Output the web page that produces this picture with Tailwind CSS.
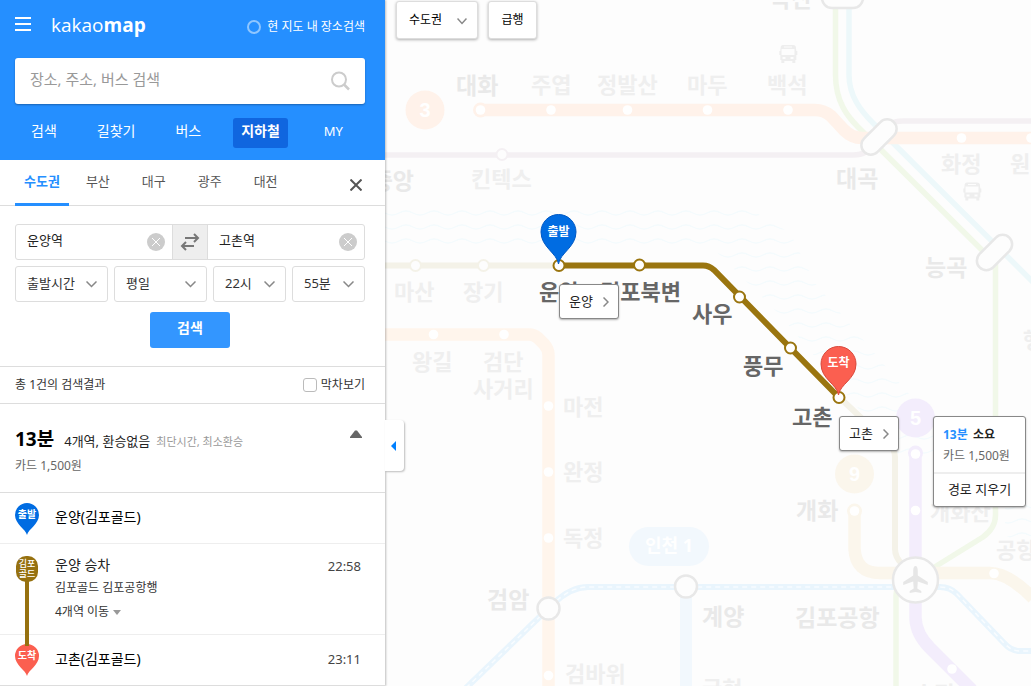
<!DOCTYPE html>
<html lang="ko">
<head>
  <meta charset="UTF-8" />
  <meta name="viewport" content="width=device-width, initial-scale=1.0"/>
  <title>카카오맵 지하철</title>
  <script src="https://cdn.jsdelivr.net/npm/@tailwindcss/browser@4"></script>
</head>
<body class="flex h-screen overflow-hidden bg-[#fdfdfd] font-['Noto_Sans','Noto_Sans_CJK_KR',sans-serif] text-xs text-[#333]">

  <!-- Side panel -->
  <aside class="relative z-10 flex h-full w-[385px] shrink-0 flex-col bg-white shadow-[1px_0_2px_rgba(0,0,0,0.25)]">

    <header class="h-40 shrink-0 bg-[#258fff] pr-5 pl-[15px] text-white">
      <div class="flex h-[58px] items-start pt-3">
        <button type="button" aria-label="메뉴" class="mt-1 mr-5">
          <svg class="block h-4 w-4" viewBox="0 0 16 16" fill="#fff"><path d="M0 1h16v2H0zM0 7h16v2H0zM0 13h16v2H0z"/></svg>
        </button>
        <a href="#" class="font-['Open_Sans',sans-serif] text-[19px] leading-[26px] font-normal">kakao<b class="font-bold">map</b></a>
        <label class="mt-1 ml-auto flex items-center gap-[6px] leading-[22px]">
          <input type="checkbox" class="h-[14px] w-[14px] appearance-none rounded-full border-2 border-[#8fc6ff]"/>
          현 지도 내 장소검색
        </label>
      </div>

      <form class="flex h-[46px] items-center rounded-[3px] bg-white px-[15px] shadow-[0_1px_2px_rgba(0,0,0,0.3)]">
        <input type="text" aria-label="장소 검색" placeholder="장소, 주소, 버스 검색" class="min-w-0 flex-1 pb-1 text-[15px] outline-none placeholder:text-[#999]"/>
        <button type="button" aria-label="검색">
          <svg class="block h-5 w-5" viewBox="0 0 20 20" fill="none" stroke="#ccc" stroke-width="2"><circle cx="9" cy="8.500" r="7"/><path d="M14 13.500l5 5" stroke-width="2.500"/></svg>
        </button>
      </form>

      <nav class="mt-[14px] flex gap-6 pl-2 text-sm leading-[26px]">
        <a href="#" class="h-[30px] px-2">검색</a>
        <a href="#" class="h-[30px] px-2">길찾기</a>
        <a href="#" class="h-[30px] px-2">버스</a>
        <a href="#" class="h-[30px] rounded-[3px] bg-[#1066df] px-2 font-bold">지하철</a>
        <a href="#" class="ml-1 h-[30px] px-2 text-[13px]">MY</a>
      </nav>
    </header>

    <!-- Region tabs -->
    <div class="flex h-[46px] shrink-0 items-stretch border-b border-[#ddd] pr-5 pl-[15px] text-[13px] leading-[42px] text-[#555]">
      <a href="#" class="-mb-px border-b-3 border-[#258fff] px-[9px] font-bold text-[#258fff]">수도권</a>
      <a href="#" class="ml-2 px-[9px]">부산</a>
      <a href="#" class="ml-[14px] px-[9px]">대구</a>
      <a href="#" class="ml-[14px] px-[9px]">광주</a>
      <a href="#" class="ml-[14px] px-[9px]">대전</a>
      <button type="button" aria-label="닫기" class="mt-1 mr-[3px] ml-auto">
        <svg class="block h-3 w-3" viewBox="0 0 12 12" stroke="#555" stroke-width="2"><path d="M.5.500l11 11M11.500.500l-11 11"/></svg>
      </button>
    </div>

    <!-- Route form -->
    <form class="h-[161px] shrink-0 border-b border-[#ddd] pt-[18px] pr-5 pl-[15px]">
      <div class="flex h-9 rounded-[3px] border border-[#ddd]">
        <div class="flex flex-1 items-center pr-[7px] pl-[11px]">
          <input type="text" aria-label="출발역" value="운양역" class="w-0 min-w-0 flex-1 pb-[2px] text-[13px] text-[#222] outline-none"/>
          <button type="button" aria-label="출발역 지우기">
            <svg class="block h-[18px] w-[18px]" viewBox="0 0 18 18"><circle cx="9" cy="9" r="9" fill="#ccc"/><path d="M5 5l8 8M13 5l-8 8" stroke="#fff"/></svg>
          </button>
        </div>
        <button type="button" aria-label="출발 도착 바꾸기" class="flex w-9 items-center justify-center border-x border-[#ddd] bg-[#eee]">
          <svg class="block h-[18px] w-5" viewBox="0 0 20 18" fill="none" stroke="#777" stroke-width="2"><path d="M5 5h13M14 1l4 4-4 4M14 13H2M6 9l-4 4 4 4"/></svg>
        </button>
        <div class="flex flex-1 items-center pr-[7px] pl-[11px]">
          <input type="text" aria-label="도착역" value="고촌역" class="w-0 min-w-0 flex-1 pb-[2px] text-[13px] text-[#222] outline-none"/>
          <button type="button" aria-label="도착역 지우기">
            <svg class="block h-[18px] w-[18px]" viewBox="0 0 18 18"><circle cx="9" cy="9" r="9" fill="#ccc"/><path d="M5 5l8 8M13 5l-8 8" stroke="#fff"/></svg>
          </button>
        </div>
      </div>

      <div class="mt-[6px] grid grid-cols-[93fr_93fr_73fr_73fr] gap-[6px] text-[13px] text-[#333]">
        <div class="relative">
          <select aria-label="시간 기준" class="h-9 w-full appearance-none rounded-[3px] border border-[#ddd] pl-[11px]"><option>출발시간</option></select>
          <svg class="pointer-events-none absolute top-[15px] right-[11px] h-[7px] w-[11px]" viewBox="0 0 11 7" fill="none" stroke="#888" stroke-width="1.500"><path d="M.5.500l5 5 5-5"/></svg>
        </div>
        <div class="relative">
          <select aria-label="요일" class="h-9 w-full appearance-none rounded-[3px] border border-[#ddd] pl-[11px]"><option>평일</option></select>
          <svg class="pointer-events-none absolute top-[15px] right-[11px] h-[7px] w-[11px]" viewBox="0 0 11 7" fill="none" stroke="#888" stroke-width="1.500"><path d="M.5.500l5 5 5-5"/></svg>
        </div>
        <div class="relative">
          <select aria-label="시" class="h-9 w-full appearance-none rounded-[3px] border border-[#ddd] pl-[11px]"><option>22시</option></select>
          <svg class="pointer-events-none absolute top-[15px] right-[11px] h-[7px] w-[11px]" viewBox="0 0 11 7" fill="none" stroke="#888" stroke-width="1.500"><path d="M.5.500l5 5 5-5"/></svg>
        </div>
        <div class="relative">
          <select aria-label="분" class="h-9 w-full appearance-none rounded-[3px] border border-[#ddd] pl-[11px]"><option>55분</option></select>
          <svg class="pointer-events-none absolute top-[15px] right-[11px] h-[7px] w-[11px]" viewBox="0 0 11 7" fill="none" stroke="#888" stroke-width="1.500"><path d="M.5.500l5 5 5-5"/></svg>
        </div>
      </div>

      <button type="button" class="mx-auto mt-[10px] block h-9 w-20 rounded-[3px] bg-[#3396ff] pb-1 text-sm font-bold text-white">검색</button>
    </form>

    <div class="flex h-[37px] shrink-0 items-center justify-between border-b border-[#ddd] pr-5 pl-[15px] text-xs">
      <p>총 1건의 검색결과</p>
      <label class="flex items-center gap-1">
        <input type="checkbox" class="h-[14px] w-[14px] appearance-none rounded-[3px] border border-[#bbb]"/>
        막차보기
      </label>
    </div>

    <!-- Route summary -->
    <section class="flex h-[89px] shrink-0 justify-between border-b border-[#ddd] px-[15px] pt-[22px]">
      <div>
        <div class="flex h-[26px] items-baseline leading-[26px]">
          <strong class="text-[19px] text-black">13분</strong>
          <span class="ml-[10px] text-[13px] text-[#222]">4개역, 환승없음</span>
          <span class="ml-[6px] text-[11px] text-[#999]">최단시간, 최소환승</span>
        </div>
        <p class="text-xs leading-7 text-[#666]">카드 1,500원</p>
      </div>
      <button type="button" aria-label="접기" class="mt-1 mr-2 self-start">
        <svg class="block h-2 w-3" viewBox="0 0 12 8" fill="#666"><path d="M0 8V7l5-6.500h2L12 7v1z"/></svg>
      </button>
    </section>

    <!-- Route steps -->
    <ol class="relative text-black">
      <li class="flex h-[51px] items-center border-b border-[#eee] px-[15px]">
        <svg class="mt-[2px] mr-4 h-8 w-6" viewBox="0 0 24 32">
          <path d="M12 32C10.500 26 0 21 0 12a12 12 0 0 1 24 0c0 9-10.500 14-12 20z" fill="#006ce2"/>
          <text x="12" y="15" font-size="10" font-weight="700" fill="#fff" text-anchor="middle">출발</text>
        </svg>
        <span class="pb-[2px] text-sm">운양(김포골드)</span>
      </li>
      <li class="flex h-[91px] border-b border-[#eee] px-[15px] pt-[10px]">
        <span class="mt-[2px] mr-[17px] ml-px flex h-[26px] w-[22px] shrink-0 flex-col items-center justify-center rounded-[10px] bg-[#967110] text-[9px] leading-[10px] font-medium text-white">
          <span>김포</span><span>골드</span>
        </span>
        <div class="flex-1">
          <p class="text-sm leading-[22px] text-[#222]">운양 승차</p>
          <p class="leading-6 text-[#333]">김포골드 김포공항행</p>
          <button type="button" class="flex items-center gap-1 leading-6 text-[#333]">4개역 이동
            <svg class="block h-[5px] w-2" viewBox="0 0 8 5" fill="#999"><path d="M0 0h8L4 5z"/></svg>
          </button>
        </div>
        <time class="mr-[9px] text-[13px] leading-6 text-[#444]">22:58</time>
      </li>
      <li class="flex h-[51px] items-center border-b border-[#ddd] px-[15px]">
        <svg class="mr-4 h-8 w-6" viewBox="0 0 24 32">
          <path d="M12 32C10.500 26 0 21 0 12a12 12 0 0 1 24 0c0 9-10.500 14-12 20z" fill="#fb5f50"/>
          <text x="12" y="15" font-size="10" font-weight="700" fill="#fff" text-anchor="middle">도착</text>
        </svg>
        <span class="flex-1 pb-[2px] text-sm">고촌(김포골드)</span>
        <time class="mr-[9px] text-[13px] text-[#444]">23:11</time>
      </li>
      <li aria-hidden="true" class="absolute top-[88px] left-[25px] h-[65px] w-1 bg-[#967110]"></li>
    </ol>

    <button type="button" aria-label="패널 접기" class="absolute top-[420px] left-full flex h-[51px] w-[19px] items-center rounded-r bg-white pl-[6px] shadow-[1px_1px_2px_rgba(0,0,0,0.25)]">
      <svg class="block h-[10px] w-[5px]" viewBox="0 0 5 10" fill="#0080ff"><path d="M5 0v10L0 5z"/></svg>
    </button>
  </aside>

  <!-- Subway map -->
  <main class="relative min-w-0 flex-1 overflow-hidden">
    <svg class="absolute inset-0 h-full w-full font-bold" viewBox="385 0 646 686" preserveAspectRatio="xMinYMin slice" fill="none">
      <defs>
        <pattern id="waves" width="28" height="14" patternUnits="userSpaceOnUse">
          <path d="M0 5q3.500 0 7-2t7-2 7 2 7 2" stroke="#f4fbfd" stroke-width="1.300"/>
        </pattern>
      </defs>
      <path d="M385 203h355l50 30 25 50 110 130 20 45h-45L780 315l-40-40-30-30H385zM1005 505h26v45l-26-15z" fill="url(#waves)"/>

      <!-- Gyeongui line and Seohae line -->
      <g stroke="#f1f8e9" stroke-width="5.500">
        <path d="M835.500 5V75C835.500 102 848 117 858 127L994 262"/>
        <path d="M995.500 262V515Q995.500 528 983 537L925 573M896 686V595Q896 585 905 580"/>
      </g>
      <path d="M849 5V75C849 96 861 111 873 123L1035 284" stroke="#edf8fa" stroke-width="5.500"/>

      <!-- GTX-A -->
      <path d="M385 155H853C867 155 869 149 877 140S886 121 903 121H1031" stroke="#f4f0f3" stroke-width="5.500"/>

      <!-- Line 3 -->
      <path d="M481 110H815Q824 110 831 116L844 130Q852 138 862 138H1031" stroke="#fff2ea" stroke-width="12.500"/>
      <circle cx="480.500" cy="110" r="7.500" fill="#fff2ea"/>
      <circle cx="425" cy="110" r="19.500" fill="#fff2ea"/>

      <!-- Incheon 2 -->
      <path d="M385 334.500H529Q534 334.500 538 338L544 344Q548.500 349 548.500 355V686" stroke="#fff5ec" stroke-width="12.500"/>

      <!-- Line 9 -->
      <path d="M854.500 511V549Q856 573 880 573H990Q1008 573 1033 598" stroke="#fbf6ec" stroke-width="12.500"/>
      <circle cx="854.500" cy="511" r="7.500" fill="#fbf6ec"/>
      <circle cx="854.500" cy="474" r="19.500" fill="#fbf6ec"/>

      <!-- Line 5 -->
      <path d="M915.500 453V618Q916 634 930 648L972 690" stroke="#f3edfc" stroke-width="12.500"/>
      <circle cx="915.500" cy="453" r="7.500" fill="#f3edfc"/>
      <circle cx="915.500" cy="418" r="19.500" fill="#f3edfc"/>

      <!-- Incheon 1 -->
      <path d="M686 587V686" stroke="#f2f8fd" stroke-width="12"/>
      <rect x="629" y="527" width="80" height="39" rx="19.500" fill="#f2f8fd"/>

      <!-- Airport railroad -->
      <g>
        <path d="M466 688L554 603Q571 587 588 587H940Q950 587 957 594L1004 643Q1011 651 1020 651H1031" stroke="#e9f5fd" stroke-width="6"/>
        <path d="M466 688L554 603Q571 587 588 587H940Q950 587 957 594L1004 643Q1011 651 1020 651H1031" stroke="#f8fcff" stroke-width="1.500" stroke-dasharray="5 4"/>
      </g>

      <!-- Gimpo Gold line -->
      <path d="M385 265.500H559M839 397L888 443Q895 449 895 457V549Q895 557 902 564" stroke="#f4f2e8" stroke-width="6"/>
      <g fill="#fdfdfd" stroke="#f4f2e8" stroke-width="2"><circle cx="415.500" cy="265.500" r="5.500"/><circle cx="483.500" cy="265.500" r="5.500"/></g>
      <circle cx="502" cy="154.500" r="5.500" fill="#fdfdfd" stroke="#f4f0f3" stroke-width="2"/>
      <path d="M559 265.500H703Q709 265.500 714 270L839 397.500" stroke="#9a750f" stroke-width="6"/>
      <g fill="#fff" stroke="#9a750f" stroke-width="2">
        <circle cx="559" cy="265.500" r="5.500"/><circle cx="639.500" cy="265" r="5.500"/><circle cx="739.500" cy="297" r="5.500"/><circle cx="790.500" cy="348" r="5.500"/><circle cx="839" cy="397.500" r="5.500"/>
      </g>

      <!-- Station dots -->
      <g fill="#fff">
        <circle cx="480.500" cy="110" r="4.800"/><circle cx="551" cy="110" r="4.800"/><circle cx="627.500" cy="110" r="4.800"/><circle cx="707.500" cy="110" r="4.800"/><circle cx="788" cy="110" r="4.800"/><circle cx="961.500" cy="138" r="4.800"/><circle cx="1031" cy="138" r="4.800"/>
        <circle cx="433.500" cy="334.500" r="4.800"/><circle cx="504" cy="334.500" r="4.800"/><circle cx="548.500" cy="406" r="4.800"/><circle cx="548.500" cy="472" r="4.800"/><circle cx="548.500" cy="538" r="4.800"/><circle cx="548.500" cy="675.500" r="4.800"/>
        <circle cx="854.500" cy="511" r="4.800"/><circle cx="994" cy="573.500" r="4.800"/><circle cx="915.500" cy="454" r="4.800"/><circle cx="915.500" cy="510.500" r="4.800"/><circle cx="952" cy="669" r="4.800"/>
      </g>

      <!-- Transfer stations -->
      <g fill="#fdfdfd" stroke="#e8e8e8" stroke-width="2.500">
        <rect x="822" y="-12" width="41" height="20" rx="10"/>
        <rect x="858" y="127.500" width="42" height="19" rx="9.500" transform="rotate(-45 879 137)"/>
        <rect x="973.500" y="243" width="42" height="19" rx="9.500" transform="rotate(-45 994.500 252.500)"/>
        <circle cx="548.500" cy="608.500" r="11"/><circle cx="686" cy="586.500" r="11"/><circle cx="915.500" cy="580" r="22.500"/>
      </g>
      <path d="M915.500 566c1.500 0 2.300 2 2.300 5v4.500l10 6.500v3l-10-3.500-.5 7 4 2.500v2l-5.800-1-5.800 1v-2l4-2.500-.5-7-10 3.500v-3l10-6.500V571c0-3 .8-5 2.300-5z" fill="#e6e6e6"/>

      <!-- Bus terminal marks -->
      <g id="bus" fill="#eee">
        <path d="M783 45h10q3 0 3 3l.3 3h1v4h-1v5h-1v3h-3v-2h-8v2h-3v-3h-1v-5h-1v-4h1l.3-3q0-3 2.400-3zM781.500 49v6h13v-6zM784 46.500v1h8v-1zM782.500 57v2h3v-2zM790.500 57v2h3v-2z" fill-rule="evenodd"/>
      </g>
      <use href="#bus" x="184" y="137.500"/>

      <!-- Station names -->
      <g fill="#e9e9e9" font-size="23">
        <text x="456" y="94">대화</text>
        <text x="770" y="7">곡산</text>
        <text x="836" y="187">대곡</text>
        <text x="925" y="276">능곡</text>
        <text x="414" y="189" text-anchor="end">중앙</text>
        <text x="487" y="608">검암</text>
        <text x="796" y="519">개화</text>
        <text x="702" y="625">계양</text>
        <text x="795" y="626">김포공항</text>
      </g>
      <g fill="#efefef" font-size="22">
        <text x="531" y="93">주엽</text>
        <text x="597" y="93">정발산</text>
        <text x="687" y="93">마두</text>
        <text x="767" y="93">백석</text>
        <text x="471" y="187">킨텍스</text>
        <text x="941" y="172">화정</text>
        <text x="1010" y="172">원당</text>
        <text x="394" y="300">마산</text>
        <text x="463" y="300">장기</text>
        <text x="412" y="370">왕길</text>
        <text x="483" y="370">검단</text>
        <text x="473" y="397">사거리</text>
        <text x="563" y="415">마전</text>
        <text x="563" y="480">완정</text>
        <text x="563" y="546">독정</text>
        <text x="565" y="682">검바위</text>
        <text x="702" y="697">귤현</text>
        <text x="914" y="702">송정</text>
        <text x="930" y="520">개화산</text>
        <text x="996" y="558">공항시장</text>
        <text x="1023" y="348">행신</text>
      </g>
      <g fill="#666" font-size="22">
        <text x="539" y="300">운양</text>
        <text x="600" y="300">김포북변</text>
        <text x="692" y="322">사우</text>
        <text x="743" y="374">풍무</text>
        <text x="792" y="425">고촌</text>
      </g>
      <g fill="#fff" font-size="20" text-anchor="middle" class="font-['Liberation_Sans',sans-serif]">
        <text x="425" y="117">3</text>
        <text x="915.500" y="425">5</text>
        <text x="854.500" y="481">9</text>
      </g>
      <text x="669" y="552" font-size="18" fill="#fff" text-anchor="middle">인천 1</text>

      <!-- Departure and arrival pins -->
      <path d="M558.500 264C557 253 541 247 541 232a17.500 17.500 0 0 1 35 0c0 15-16 21-17.500 32z" fill="#006ce2" stroke="#0059c4"/>
      <path d="M838.500 395C837 384 821 379 821 364a17.500 17.500 0 0 1 35 0c0 15-16 20-17.500 31z" fill="#fb5f50" stroke="#d9493c"/>
      <g fill="#fff" font-size="12" text-anchor="middle">
        <text x="558.500" y="236">출발</text>
        <text x="838.500" y="367">도착</text>
      </g>
    </svg>

    <!-- Map controls -->
    <div class="relative flex gap-[10px] pt-px pl-[11px] text-black">
      <div class="relative">
        <select aria-label="지역" class="h-[38px] w-[82px] appearance-none rounded-[3px] border border-[#ddd] bg-white pl-3 shadow-[0_1px_3px_rgba(0,0,0,0.3)]"><option>수도권</option></select>
        <svg class="pointer-events-none absolute top-[17px] right-[11px] h-[7px] w-[10px]" viewBox="0 0 10 7" fill="none" stroke="#888" stroke-width="1.500"><path d="M.5.500L5 5.500l4.500-5"/></svg>
      </div>
      <button type="button" class="h-[38px] w-[49px] rounded-[3px] border border-[#ddd] bg-white shadow-[0_1px_3px_rgba(0,0,0,0.3)]">급행</button>
    </div>

    <a href="#" class="absolute top-[284px] left-[174px] flex h-[35px] w-[60px] items-center justify-between rounded-[3px] border border-[#888] bg-white px-[9px] text-[13px] text-[#222] shadow-[0_1px_2px_rgba(0,0,0,0.3)]">운양
      <svg class="block h-[10px] w-[6px]" viewBox="0 0 6 10" fill="none" stroke="#888" stroke-width="1.500"><path d="M.5.500L5 5 .5 9.500"/></svg>
    </a>
    <a href="#" class="absolute top-[416px] left-[454px] flex h-[35px] w-[60px] items-center justify-between rounded-[3px] border border-[#888] bg-white px-[9px] text-[13px] text-[#222] shadow-[0_1px_2px_rgba(0,0,0,0.3)]">고촌
      <svg class="block h-[10px] w-[6px]" viewBox="0 0 6 10" fill="none" stroke="#888" stroke-width="1.500"><path d="M.5.500L5 5 .5 9.500"/></svg>
    </a>

    <div class="absolute top-[416px] left-[548px] w-[93px] rounded-[3px] border border-[#888] bg-white shadow-[0_1px_2px_rgba(0,0,0,0.3)]">
      <div class="h-[57px] border-b-2 border-[#eee] px-[9px] pt-2">
        <p class="leading-5 font-bold text-[#222]"><span class="mr-[2px] text-[#258fff]">13분</span> 소요</p>
        <p class="leading-[22px] whitespace-nowrap text-[#666]">카드 1,500원</p>
      </div>
      <button type="button" class="h-8 w-full text-center text-[13px] text-[#222]">경로 지우기</button>
    </div>
  </main>

</body>
</html>
